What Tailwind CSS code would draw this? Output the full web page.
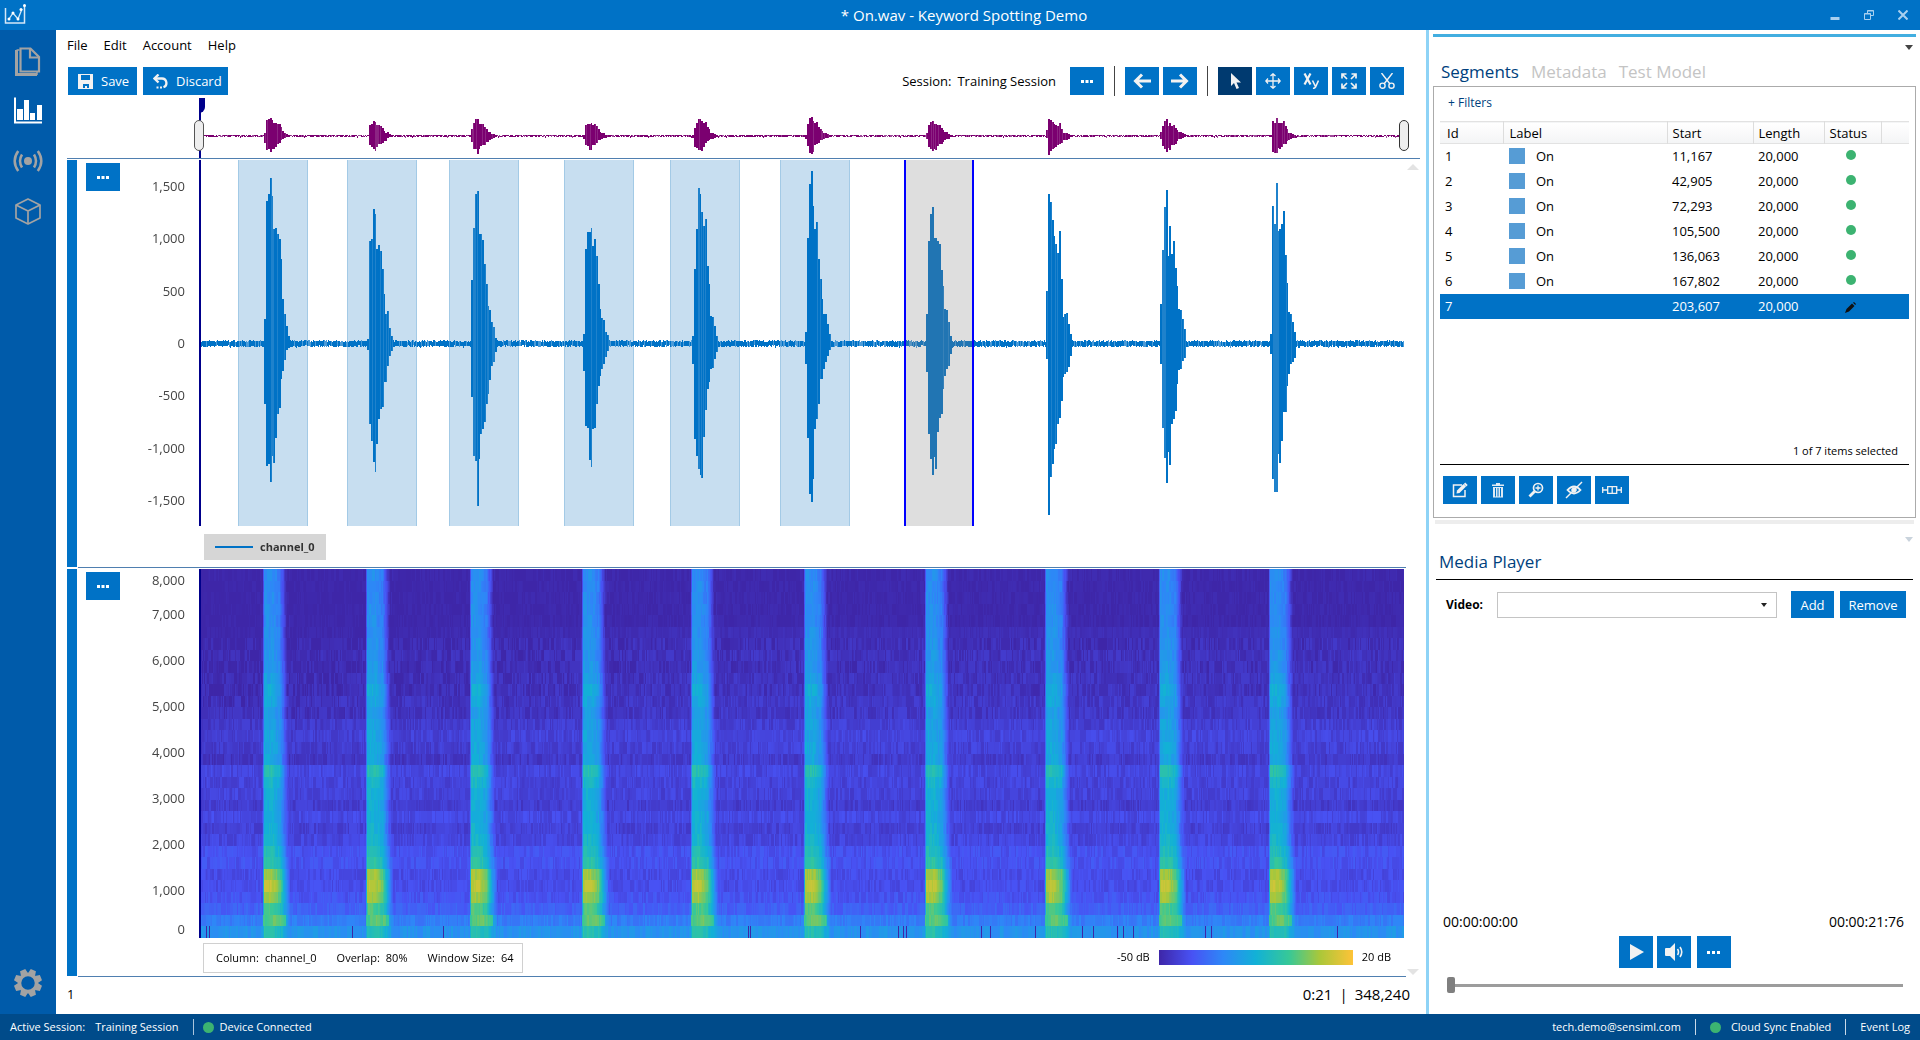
<!DOCTYPE html>
<html lang="en">
<head>
<meta charset="utf-8">
<title>On.wav - Keyword Spotting Demo</title>
<script src="https://cdn.jsdelivr.net/npm/@tailwindcss/browser@4"></script>
</head>
<body class="flex h-screen min-h-[800px] min-w-[1280px] flex-col overflow-hidden bg-white font-['Open_Sans','Noto_Sans',sans-serif] text-[13px] leading-[18px] text-black">

<!-- Title bar -->
<header class="relative flex h-[30px] shrink-0 items-center justify-between bg-[#0072c6] pl-1 pr-3 text-white">
  <svg class="size-6" viewBox="0 0 24 24" fill="none" stroke="#d4e8f7" stroke-width="1.5"><path d="M1.5 5v15h19V2"/><path d="M5 16l4-6 5 6 4-10" stroke-width="1.3"/><g fill="#fff" stroke="none"><circle cx="5" cy="16" r="1.5"/><circle cx="9" cy="10" r="1.5"/><circle cx="14" cy="16" r="1.5"/><circle cx="17" cy="6.500" r="1.500"/><circle cx="20.500" cy="2.500" r="1.500"/></g></svg>
  <h1 class="absolute inset-x-0 pl-2 text-center text-[15px] leading-[20px]">* On.wav - Keyword Spotting Demo</h1>
  <div class="relative flex gap-6 text-[#a9d0ef]">
    <button aria-label="Minimize"><svg class="size-[10px]" viewBox="0 0 10 10"><path d="M0.500 7h9v3h-9z" fill="currentColor"/></svg></button>
    <button aria-label="Restore"><svg class="size-[10px]" viewBox="0 0 10 10" fill="none" stroke="currentColor"><path d="M3.500 3V.5h6v5H7M3.500 1h6"/><path d="M.5 3.500h6v6h-6zM.5 4h6"/></svg></button>
    <button aria-label="Close"><svg class="size-[10px]" viewBox="0 0 10 10" stroke="currentColor" stroke-width="2"><path d="M.5.5l9 9M9.500.5l-9 9"/></svg></button>
  </div>
</header>

<div class="flex min-h-0 flex-1">
  <!-- Navigation rail -->
  <nav class="flex w-14 shrink-0 flex-col items-center gap-5 bg-[#005baa] pb-4 pt-4 text-[#a3a3a3]" aria-label="Main">
    <a href="#project" aria-label="Project"><svg class="size-[30px]" viewBox="0 0 30 30" fill="none" stroke="currentColor" stroke-width="2.200"><path d="M7.500 2.500h10l8.500 8.500v14.500H7.500z"/><path d="M17 3v8.500h9"/><path d="M3.500 4v24.500H24" stroke-width="3"/><path d="M3.500 4h3M24 26v3" stroke-width="1.500"/></svg></a>
    <a href="#explore" aria-label="Data explorer" class="text-white"><svg class="size-[30px]" viewBox="0 0 30 30" fill="currentColor"><path d="M1 1.500h2v24h26v2H1z"/><path d="M4 13h6v11H4zM11 4h5v20h-5zM17 17h5v7h-5zM24 9h5v15h-5z"/></svg></a>
    <a href="#capture" aria-label="Live capture"><svg class="size-[30px]" viewBox="0 0 30 30" fill="none" stroke="currentColor" stroke-width="2.500"><circle cx="15" cy="15" r="4" fill="currentColor" stroke="none"/><path d="M9 8.500q-4 6.500 0 13M21 8.500q4 6.500 0 13M5.200 5q-7 10 0 20M24.800 5q7 10 0 20"/></svg></a>
    <a href="#models" aria-label="Models"><svg class="size-[30px]" viewBox="0 0 30 30" fill="none" stroke="currentColor" stroke-width="1.700" stroke-linejoin="round"><path d="M15 3l12 6v13l-12 6-12-6V9z"/><path d="M3 9l12 6 12-6M15 15v13"/></svg></a>
    <a href="#settings" aria-label="Settings" class="mt-auto"><svg class="size-[30px]" viewBox="0 0 30 30"><g fill="currentColor" transform="translate(15 15) rotate(22.500)"><g id="teeth"><path d="M-2.800-14h5.600l1 5h-7.600zM-2.800 14h5.600l1-5h-7.600z"/><path d="M-2.800-14h5.600l1 5h-7.600zM-2.800 14h5.600l1-5h-7.600z" transform="rotate(90)"/></g><use href="#teeth" transform="rotate(45)"/></g><circle cx="15" cy="15" r="8.500" fill="#005baa" stroke="currentColor" stroke-width="3.500"/></svg></a>
  </nav>

  <!-- Workspace -->
  <main class="flex min-w-0 flex-1 flex-col pl-[11px] pr-[6px]">
    <nav class="flex h-[30px] shrink-0 items-center gap-4" aria-label="Menu">
      <a href="#file">File</a><a href="#edit">Edit</a><a href="#account">Account</a><a href="#help">Help</a>
    </nav>
    <div class="flex h-[38px] shrink-0 items-center pl-px pr-4 pt-1">
      <button class="flex h-7 w-[69px] items-center gap-2 bg-[#0072c6] pl-[10px] text-white"><svg class="size-[15px] shrink-0" viewBox="0 0 15 15"><path d="M0 0h15v15H0z" fill="#f2f2f2"/><path d="M3 1h9v5H3zM5 10h6v4H9v-2H7v2H5z" fill="#0072c6"/></svg>Save</button>
      <button class="ml-[6px] flex h-7 w-[85px] items-center gap-2 bg-[#0072c6] pl-[10px] text-white"><svg class="size-[15px] shrink-0" viewBox="0 0 15 15" fill="none" stroke="#f2f2f2" stroke-width="2.300"><path d="M5.500.5L1.500 4.500l4 4"/><path d="M2 4.500h7a4.500 4.500 0 0 1 1.500 8.700"/><path d="M3.500 13.500h2M7 13.500h2" stroke-width="2"/></svg>Discard</button>
      <div class="ml-auto flex items-center">
        <span class="mr-[6px]">Session:</span><span class="mr-[14px]">Training Session</span>
        <button aria-label="Choose session" class="grid h-7 w-[34px] place-items-center bg-[#0072c6]"><svg class="h-[3px] w-3" viewBox="0 0 12 3" fill="#fff"><path d="M0 0h3v3H0zM4.500 0h3v3h-3zM9 0h3v3H9z"/></svg></button>
        <span class="mx-[10px] h-[30px] w-px bg-[#444]"></span>
        <div class="flex gap-1">
          <button aria-label="Previous" class="grid h-7 w-[34px] place-items-center bg-[#0072c6]"><svg class="size-[18px]" viewBox="0 0 18 18" fill="none" stroke="#f2f2f2" stroke-width="3"><path d="M2 9h16M9 2.500L2.500 9 9 15.500"/></svg></button>
          <button aria-label="Next" class="grid h-7 w-[34px] place-items-center bg-[#0072c6]"><svg class="size-[18px]" viewBox="0 0 18 18" fill="none" stroke="#f2f2f2" stroke-width="3"><path d="M0 9h16M9 2.500L15.500 9 9 15.500"/></svg></button>
        </div>
        <span class="mx-[10px] h-[30px] w-px bg-[#444]"></span>
        <div class="flex gap-1">
          <button aria-label="Select" aria-pressed="true" class="grid h-7 w-[34px] place-items-center bg-[#003a70]"><svg class="h-4 w-[11px]" viewBox="0 0 11 16"><path d="M1 0v13l3-3 2.500 6 2.500-1-2.500-5.500H11z" fill="#f2f2f2"/></svg></button>
          <button aria-label="Pan" class="grid h-7 w-[34px] place-items-center bg-[#0072c6]"><svg class="size-4" viewBox="0 0 16 16" fill="none" stroke="#f2f2f2" stroke-width="1.300"><path d="M8 1v14M1 8h14M5.500 3L8 .8 10.500 3M5.500 13L8 15.200 10.500 13M3 5.500L.8 8 3 10.500M13 5.500L15.200 8 13 10.500"/></svg></button>
          <button aria-label="Axis scale" class="flex h-7 w-[34px] items-center justify-center bg-[#0072c6]"><svg class="size-4" viewBox="0 0 16 16" fill="none" stroke="#f2f2f2"><path d="M1.500 0.500l6 11M7.500 0.500l-6 11" stroke-width="2.200"/><path d="M9.500 7.500l3 6M15.500 7.500l-3 6.500q-1 1.500-2.500 1.200" stroke-width="1.600"/></svg></button>
          <button aria-label="Zoom to fit" class="grid h-7 w-[34px] place-items-center bg-[#0072c6]"><svg class="size-4" viewBox="0 0 16 16" fill="none" stroke="#f2f2f2" stroke-width="1.700"><path d="M1 5.500V1h4.500M1 1l5 5M10.500 1H15v4.500M15 1l-5 5M1 10.500V15h4.500M1 15l5-5M10.500 15H15v-4.500M15 15l-5-5"/></svg></button>
          <button aria-label="Cut" class="grid h-7 w-[34px] place-items-center bg-[#0072c6]"><svg class="size-4" viewBox="0 0 16 16" fill="none" stroke="#f2f2f2" stroke-width="1.400"><path d="M2.500 0l8.500 11M13.500 0L5 11"/><circle cx="3.500" cy="12.700" r="2.600"/><circle cx="12.500" cy="12.700" r="2.600"/></svg></button>
        </div>
      </div>
    </div>

    <!-- Whole-file overview -->
    <div class="flex h-[61px] shrink-0 border-b border-[#4f7fb0] pl-[132px] pr-4">
      <div class="relative min-w-0 flex-1">
        <canvas id="overview" width="1205" height="60" class="block size-full [image-rendering:pixelated]"></canvas>
        <span class="absolute left-0 top-0 h-full w-0.5 bg-[#00008b]"></span>
        <span class="absolute left-0 top-0 h-[15px] w-[6px] rounded-br-md bg-[#00008b]"></span>
        <button aria-label="Range start" class="absolute -left-[5px] top-[22px] h-[31px] w-[10px] rounded-full border border-[#555] bg-[#eee]"></button>
        <button aria-label="Range end" class="absolute -right-[5px] top-[22px] h-[31px] w-[10px] rounded-full border border-[#333] bg-[#eee]"></button>
      </div>
    </div>

    <div class="relative mt-px grid min-h-0 flex-1 grid-rows-[409fr_408fr] pr-[14px]">
      <svg class="absolute right-px top-1 h-[6px] w-3" viewBox="0 0 12 6" fill="#e3e3e3"><path d="M6 0l6 6H0z"/></svg>
      <svg class="absolute bottom-0.5 right-px h-[6px] w-3" viewBox="0 0 12 6" fill="#e3e3e3"><path d="M6 6l6-6H0z"/></svg>

      <!-- Waveform -->
      <section class="flex min-h-0 pb-px" aria-label="Waveform">
        <span class="mb-px mr-px w-[10px] shrink-0 bg-[#0072c6]"></span>
        <div class="flex min-w-0 flex-1 flex-col border-b border-[#4f7fb0] pr-0.5">
          <div class="flex min-h-0 flex-1">
            <div class="flex w-[121px] shrink-0 pl-2 pr-[14px]">
              <button aria-label="Waveform options" class="mt-[3px] grid h-7 w-[34px] place-items-center bg-[#0072c6]"><svg class="h-[3px] w-3" viewBox="0 0 12 3" fill="#fff"><path d="M0 0h3v3H0zM4.500 0h3v3h-3zM9 0h3v3H9z"/></svg></button>
              <ul class="grid flex-1 grid-rows-7 items-center text-right text-[#444]">
                <li>1,500</li><li>1,000</li><li>500</li><li>0</li><li>-500</li><li>-1,000</li><li>-1,500</li>
              </ul>
            </div>
            <div class="relative min-w-0 flex-1" id="segments">
              <canvas id="wave" width="1205" height="366" class="absolute inset-0 z-10 block size-full [image-rendering:pixelated]"></canvas>
              <span class="absolute left-0 top-0 z-20 h-full w-0.5 bg-[#00008b]"></span>
            </div>
          </div>
          <div class="flex h-[41px] shrink-0 items-center pl-[126px] pt-px">
            <div class="flex h-[26px] items-center gap-[7px] bg-[#d6d6d6] px-[11px] text-[11px] font-bold text-[#333]"><span class="h-0.5 w-[38px] bg-[#0072c6]"></span>channel_0</div>
          </div>
        </div>
      </section>

      <!-- Spectrogram -->
      <section class="flex min-h-0" aria-label="Spectrogram">
        <span class="mb-px mr-px w-[10px] shrink-0 bg-[#0072c6]"></span>
        <div class="flex min-w-0 flex-1 flex-col border-b border-[#4f7fb0] pr-0.5">
          <div class="flex min-h-0 flex-1">
            <div class="flex w-[121px] shrink-0 pl-2 pr-[14px]">
              <button aria-label="Spectrogram options" class="mt-[3px] grid h-7 w-[34px] place-items-center bg-[#0072c6]"><svg class="h-[3px] w-3" viewBox="0 0 12 3" fill="#fff"><path d="M0 0h3v3H0zM4.500 0h3v3h-3zM9 0h3v3H9z"/></svg></button>
              <ul class="grid flex-1 grid-rows-[22fr_repeat(7,46fr)_25fr] items-center text-right text-[#444]">
                <li>8,000</li><li>7,000</li><li>6,000</li><li>5,000</li><li>4,000</li><li>3,000</li><li>2,000</li><li>1,000</li><li class="self-end">0</li>
              </ul>
            </div>
            <div class="relative min-w-0 flex-1">
              <canvas id="spectrum" width="1205" height="369" class="absolute inset-0 block size-full [image-rendering:pixelated]"></canvas>
              <span class="absolute left-0 top-0 h-full w-0.5 bg-[#00008b]"></span>
            </div>
          </div>
          <div class="flex h-[38px] shrink-0 items-center justify-between pl-[125px] pr-[13px] text-[11px]">
            <div class="mt-px flex h-[30px] items-center gap-5 border border-[#d0d0d0] pl-3 pr-2">
              <span class="flex gap-[6px]"><span>Column:</span><span>channel_0</span></span>
              <span class="flex gap-[6px]"><span>Overlap:</span><span>80%</span></span>
              <span class="flex gap-[6px]"><span>Window Size:</span><span>64</span></span>
            </div>
            <div class="flex items-center gap-[9px]">-50 dB<span class="h-[15px] w-[194px] [background-image:linear-gradient(90deg,#3e26a8,#4852f4_17%,#2e87f7_33%,#12b1d6_50%,#37c897_67%,#abc739_83%,#fec338)]"></span>20 dB</div>
          </div>
        </div>
      </section>
    </div>

    <div class="flex h-[37px] shrink-0 items-center justify-between pb-[3px] pr-[10px] text-[15px]">
      <span class="text-[13px]">1</span>
      <span class="flex gap-[7px]"><span>0:21</span><span>|</span><span>348,240</span></span>
    </div>
  </main>

  <!-- Side panel -->
  <aside class="flex w-[494px] shrink-0 flex-col border-l-[3px] border-[#8ed3f6] pl-1 pr-1 pt-1">
    <div class="flex h-[52px] shrink-0 flex-col border-t-[3px] border-[#42aee0]">
      <div class="flex justify-end pr-[3px] pt-2"><svg class="h-[5px] w-2" viewBox="0 0 8 5" fill="#444"><path d="M0 0h8L4 5z"/></svg></div>
      <nav class="mt-[10px] flex gap-3 pl-2 text-[17px] leading-[24px] text-[#c4c4c4]" aria-label="Panels">
        <a href="#segments-tab" class="text-[#003f7d]">Segments</a><a href="#metadata">Metadata</a><a href="#test">Test Model</a>
      </nav>
    </div>
    <section class="flex h-[432px] shrink-0 flex-col border border-[#ababab] px-[6px]">
      <button class="ml-2 mt-[7px] self-start text-[12px] text-[#003f7d]">+ Filters</button>
      <table class="mt-[9px] w-full table-fixed border-collapse text-left">
        <colgroup><col class="w-[63px]"><col><col class="w-[86px]"><col class="w-[71px]"><col class="w-[57px]"><col class="w-[28px]"></colgroup>
        <thead><tr class="h-[22px] border-y border-[#e2e2e2] bg-linear-to-b from-white to-[#f4f5f6]">
          <th class="border-r border-[#ddd] pl-[7px] font-normal">Id</th><th class="border-r border-[#ddd] pl-[6px] font-normal">Label</th><th class="border-r border-[#ddd] pl-[5px] font-normal">Start</th><th class="border-r border-[#ddd] pl-[5px] font-normal">Length</th><th class="border-r border-[#ddd] pl-[5px] font-normal">Status</th><th></th>
        </tr></thead>
        <tbody id="rows"></tbody>
      </table>
      <div class="mt-auto border-b border-black pb-1 pr-[11px] text-right text-[11px]">1 of 7 items selected</div>
      <div class="flex gap-1 pb-[13px] pl-[3px] pt-[11px]">
        <button aria-label="Edit" class="grid h-7 w-[34px] place-items-center bg-[#0072c6]"><svg class="size-4" viewBox="0 0 16 16" fill="none" stroke="#f2f2f2"><path d="M10 3H1.500v11.500H13V8" stroke-width="1.500"/><path d="M5 8.500l6.500-6.500 2.500 2.500L7.500 11l-3 .5z" fill="#f2f2f2" stroke="none"/><path d="M12.500 1.200l2.500 2.500" stroke-width="2"/></svg></button>
        <button aria-label="Delete" class="grid h-7 w-[34px] place-items-center bg-[#0072c6]"><svg class="size-4" viewBox="0 0 16 16" fill="#dfeaf4"><path d="M6 1h4v1.500h4V4H2V2.500h4z"/><path fill-rule="evenodd" d="M3 5h10v10.500H3zM5 6v8.500h1V6zM7.500 6v8.500h1V6zM10 6v8.500h1V6z"/></svg></button>
        <button aria-label="Zoom to segment" class="grid h-7 w-[34px] place-items-center bg-[#0072c6]"><svg class="size-4" viewBox="0 0 16 16" fill="none" stroke="#f2f2f2"><circle cx="10" cy="6" r="4.500" stroke-width="1.700"/><path d="M6.500 9.500L1.500 14.500" stroke-width="2.800"/><path d="M10 3.500v5M7.500 6h5" stroke-width="1.300"/></svg></button>
        <button aria-label="Hide segments" class="grid h-7 w-[34px] place-items-center bg-[#0072c6]"><svg class="h-[18px] w-[18px]" viewBox="0 0 18 18" fill="none" stroke="#f2f2f2"><path d="M2.500 9q6.500-7 13 0-6.500 7-13 0z" stroke-width="1.800"/><circle cx="9" cy="9" r="2.300" fill="#f2f2f2"/><path d="M1 17L17 1" stroke-width="1.500"/></svg></button>
        <button aria-label="Merge segments" class="grid h-7 w-[34px] place-items-center bg-[#0072c6]"><svg class="h-2 w-5" viewBox="0 0 20 8" fill="none" stroke="#f2f2f2" stroke-width="1.300"><path d="M.7 1v6M1 4h4.500M5.700.7h9v6.600h-9zM10.200.7v6.600M15 4h4M19.300 1v6"/></svg></button>
      </div>
    </section>
    <div class="mx-0.5 mt-0.5 h-1 shrink-0 bg-[#ededed]"></div>

    <section class="flex min-h-0 flex-1 flex-col px-[3px]" aria-label="Media player">
      <div class="flex justify-end pt-[13px]"><svg class="h-[5px] w-2" viewBox="0 0 8 5" fill="#c9d3dc"><path d="M0 0h8L4 5z"/></svg></div>
      <h2 class="mt-2 border-b border-black pb-[5px] pl-[3px] text-[17px] leading-[24px] text-[#003f7d]">Media Player</h2>
      <div class="mt-[11px] flex h-[27px] items-center pl-[10px] pr-[7px]">
        <label for="video" class="mr-[14px] text-[12px] font-bold">Video:</label>
        <div class="relative flex-1">
          <select id="video" class="block h-[26px] w-full appearance-none border border-[#c4c4c4] bg-white px-2"><option></option></select>
          <svg class="pointer-events-none absolute right-[10px] top-[11px] h-1 w-[6px]" viewBox="0 0 6 4" fill="#222"><path d="M0 0h6L3 4z"/></svg>
        </div>
        <button class="ml-[14px] h-[27px] w-[43px] bg-[#0072c6] text-white">Add</button>
        <button class="ml-[6px] h-[27px] w-[66px] bg-[#0072c6] text-white">Remove</button>
      </div>
      <div class="mt-auto flex justify-between pl-[7px] pr-[9px] text-[14px]"><span>00:00:00:00</span><span>00:00:21:76</span></div>
      <div class="mt-[5px] flex justify-center">
        <button aria-label="Play" class="grid h-8 w-[34px] place-items-center bg-[#0072c6]"><svg class="size-4" viewBox="0 0 16 16" fill="#f2f2f2"><path d="M2 0l14 8-14 8z"/></svg></button>
        <button aria-label="Volume" class="ml-1 grid h-8 w-[34px] place-items-center bg-[#0072c6]"><svg class="h-[18px] w-5" viewBox="0 0 20 18"><path d="M1 6q0-1 1-1h4l5-5v18l-5-5H2q-1 0-1-1z" fill="#f2f2f2"/><path d="M13.500 6q2 3 0 6M16 4q3.500 5 0 10" fill="none" stroke="#f2f2f2" stroke-width="1.600"/></svg></button>
        <button aria-label="More" class="ml-[6px] grid h-8 w-[34px] place-items-center bg-[#0072c6]"><svg class="h-[3px] w-[13px]" viewBox="0 0 13 3" fill="#fff"><path d="M0 0h3v3H0zM5 0h3v3H5zM10 0h3v3h-3z"/></svg></button>
      </div>
      <input type="range" value="0" aria-label="Position" class="mb-[21px] ml-[11px] mr-[10px] mt-[9px] h-4 appearance-none bg-transparent [&::-webkit-slider-runnable-track]:h-[3px] [&::-webkit-slider-runnable-track]:bg-[#9c9c9c] [&::-webkit-slider-thumb]:-mt-[7px] [&::-webkit-slider-thumb]:h-4 [&::-webkit-slider-thumb]:w-2 [&::-webkit-slider-thumb]:appearance-none [&::-webkit-slider-thumb]:rounded-[2px] [&::-webkit-slider-thumb]:bg-[#7f7f7f]">
    </section>
  </aside>
</div>

<!-- Status bar -->
<footer class="flex h-[26px] shrink-0 items-center justify-between bg-[#004b8a] px-[10px] text-[11px] text-white">
  <div class="flex items-center"><span class="mr-[10px]">Active Session:</span><span>Training Session</span><span class="ml-[14px] mr-[9px] h-4 w-px bg-[#a9c4dc]"></span><span class="mr-[6px] size-[11px] rounded-full bg-[#3cb371]"></span><span>Device Connected</span></div>
  <div class="flex items-center"><a href="mailto:tech.demo@sensiml.com">tech.demo@sensiml.com</a><span class="mx-[14px] h-4 w-px bg-[#c9d9e8]"></span><span class="mr-[10px] size-[11px] rounded-full bg-[#3cb371]"></span><span>Cloud Sync Enabled</span><span class="mx-[14px] h-4 w-px bg-[#c9d9e8]"></span><a href="#log">Event Log</a></div>
</footer>

<script>
// Segment table
const segments = [['11,167','20,000'],['42,905','20,000'],['72,293','20,000'],['105,500','20,000'],['136,063','20,000'],['167,802','20,000'],['203,607','20,000']];
document.getElementById('rows').innerHTML = segments.map((s, i) => {
  const sel = i === 6;
  const label = sel ? '' : '<span class="mr-[11px] inline-block size-4 bg-[#569cd5] align-[-3px]"></span>On';
  const status = sel
    ? '<svg class="inline size-[11px]" viewBox="0 0 11 11"><path d="M0 11l1.500-4L7 1.500 9.500 4 4 9.500zM8 .8L9 0l2 2-.8 1z" fill="#111"/></svg>'
    : '<span class="inline-block size-[10px] rounded-full bg-[#3cb371] align-[1px]"></span>';
  return `<tr class="${sel ? 'h-[25px] bg-[#0072c6] text-white' : 'h-[25px]'}"><td class="pl-[5px]">${i + 1}</td><td class="pl-[6px]">${label}</td><td class="pl-[5px]">${s[0]}</td><td class="pl-[5px]">${s[1]}</td><td class="pr-1 text-center">${status}</td><td></td></tr>`;
}).join('');

// Highlighted ranges, in units of the 1205-wide time axis
const SPAN = 1205;
const ranges = [[39,70],[148,70],[250,70],[365,70],[471,70],[581,70],[705,70,true]];
const host = document.getElementById('segments');
ranges.forEach(([x, w, active]) => {
  const d = document.createElement('div');
  d.className = active ? 'absolute top-0 z-20 h-full border-x-2 border-[#0000ff] bg-[#808080]/26'
                       : 'absolute top-0 z-0 h-full border-x border-[#a3cae6] bg-[#c7def0]';
  d.style.left = x / SPAN * 100 + '%';
  d.style.width = w / SPAN * 100 + '%';
  host.appendChild(d);
});

// Bursts: onset, then upper and lower envelopes sampled every STEP units
const STEP = 1.8;
const bursts = [
  [65,[25,143,150,166,148,115,116,110,105,85,45,30,18,8,4],[60,122,120,138,112,119,94,70,64,35,27,16,6,4,3]],
  [168,[5,103,105,135,130,95,99,93,75,50,30,33,16,8,4],[6,80,97,118,128,100,75,65,63,38,38,22,12,7,3]],
  [272,[64,116,150,153,110,110,104,80,60,38,34,22,17,6,2],[53,112,117,162,115,90,85,78,60,50,36,22,18,8,3]],
  [384,[10,95,112,112,116,98,105,88,60,35,26,24,12,9,2],[27,82,84,116,123,85,84,60,42,32,25,20,13,7,2]],
  [493,[8,75,115,156,150,132,118,125,78,60,28,27,18,8,2],[20,95,112,125,131,134,93,66,45,38,25,24,15,8,2]],
  [606,[12,106,160,173,138,115,122,85,65,45,30,30,20,10,2],[20,94,150,158,135,85,75,60,35,35,25,18,12,6,2]],
  [727,[30,103,130,137,106,106,103,100,74,58,35,34,22,8,2],[28,90,115,131,113,125,88,74,70,45,32,25,22,10,3]],
  [847,[53,150,142,124,108,100,91,113,65,27,30,31,20,10,3],[15,171,133,120,105,100,80,74,57,33,30,28,23,12,3]],
  [961,[40,94,137,154,88,118,90,103,76,58,35,34,25,15,3],[20,84,114,139,108,121,80,75,67,40,26,25,17,14,3]],
  [1071,[10,138,120,161,113,115,120,133,89,61,32,30,22,12,3],[10,135,148,148,110,119,97,68,68,42,30,20,18,14,3]]
];
let seed = 7;
const rnd = () => (seed = (seed * 16807) % 2147483647) / 2147483647;
const canvas = id => document.getElementById(id);

function drawWave(id, centre, gain, noise, dark, light, soft) {
  const c = canvas(id), g = c.getContext('2d'), mid = c.height * centre, k = gain * c.height;
  for (let px = 2; px < c.width; px++) {
    const x = px * SPAN / c.width;
    let up = noise * (0.6 + rnd() * 0.5), dn = noise * (0.6 + rnd() * 0.5), loud = false;
    for (const [on, u, d] of bursts) {
      const i = Math.floor((x - on) / STEP);
      if (i >= 0 && i < u.length) { up = Math.max(up, u[i] * k); dn = Math.max(dn, d[i] * k); loud = true; }
    }
    g.fillStyle = rnd() < 0.22 ? (loud ? soft : light) : dark;
    g.fillRect(px, Math.round(mid - up), 1, Math.max(1, Math.round(up + dn)));
  }
}
drawWave('wave', 0.502, 1 / 366, 3.2, '#0072c6', '#4b9bd8', '#1f82cc');
drawWave('overview', 0.635, 0.112 / 60, 0.9, '#7b0070', '#a04a9a', '#8c2483');

// Spectrogram
const stops = [[62,38,168],[72,82,244],[46,135,247],[18,177,214],[55,200,151],[171,199,57],[254,195,56]];
const colour = v => {
  const t = Math.max(0, Math.min(0.999, v)) * 6, i = Math.floor(t), f = t - i;
  return 'rgb(' + stops[i].map((s, n) => Math.round(s + (stops[i + 1][n] - s) * f)).join() + ')';
};
const floor = [0,0,0,0,0,0,.005,.015,.01,.02,.02,.035,.035,.065,.085,.075,.05,.11,.1,.1,.075,.12,.09,.11,.15,.155,.13,.135,.16,.2,.29,.37];
const peak = [.36,.36,.36,.37,.37,.38,.39,.4,.41,.44,.49,.47,.43,.45,.46,.47,.47,.6,.54,.5,.49,.5,.51,.53,.58,.63,.82,.87,.82,.7,.74,.6];
function drawSpectrum() {
  const c = canvas('spectrum'), g = c.getContext('2d'), rh = c.height / 32;
  for (let r = 0; r < 32; r++) {
    const y0 = Math.round(r * rh), y1 = Math.round((r + 1) * rh);
    let n = 0;
    for (let px = 2; px < c.width; px++) {
      const x = px * SPAN / c.width;
      if (rnd() < 0.6) n = rnd() - 0.5;
      const lift = r < 17 ? 0.03 * Math.min(1, x / 500) * (r > 4 ? 1 : 0.3) : 0.01;
      let v = floor[r] + lift + n * (r < 6 ? 0.03 : 0.075);
      if (r === 31 && rnd() < 0.02) v = 0;
      for (const [on] of bursts) {
        const t = x - on;
        if (t < -1 || t > 25) continue;
        const tail = r > 24 ? 26 : 22 + r * 0.1;
        const p = t < 0 ? 0.5 : t < 8 ? 1 : t < 15 ? 1 - (t - 8) * 0.025 : t < tail ? 0.82 * (tail - t) / (tail - 15) + 0.03 : 0;
        const mix = r === 30 ? (t < 22 ? 0.85 + 0.15 * Math.sin(t / 6) : p) : p;
        v = Math.max(v, floor[r] + (peak[r] - floor[r]) * mix + n * 0.07);
      }
      g.fillStyle = colour(v);
      g.fillRect(px, y0, 1, y1 - y0);
    }
  }
}
drawSpectrum();
</script>
</body>
</html>
